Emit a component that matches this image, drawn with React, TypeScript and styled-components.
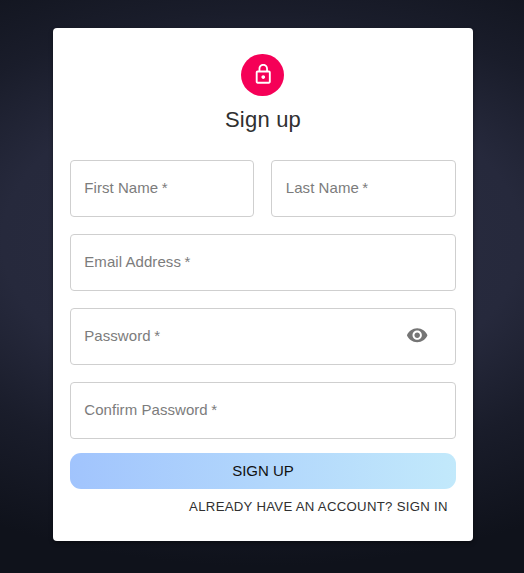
import React from "react";
import styled, { createGlobalStyle } from "styled-components";

const GlobalStyle = createGlobalStyle`
  * { box-sizing: border-box; }
  body {
    margin: 0;
    font-family: "Liberation Sans", Arial, sans-serif;
  }
`;

const Page = styled.main`
  height: 573px;
  padding: 28px 50.5px 0 52.6px;
  overflow: hidden;
  background:
    radial-gradient(ellipse 520px 310px at 50% 42%, #2a2d42 0%, #26293c 50%, rgba(30, 33, 49, 0.7) 74%, rgba(15, 18, 27, 0) 105%),
    #0f121b;
`;

const Card = styled.form`
  display: flex;
  flex-direction: column;
  width: 420.8px;
  height: 513.4px;
  padding: 25.5px 17px 0;
  border-radius: 4px;
  background: #fff;
  box-shadow: 0 2px 4px rgba(0, 0, 0, 0.4);
`;

const Header = styled.header`
  display: flex;
  flex-direction: column;
  align-items: center;
`;

const Avatar = styled.div`
  display: grid;
  place-items: center;
  width: 43px;
  height: 42.6px;
  padding-bottom: 1.4px;
  border-radius: 50%;
  background: #f50057;
`;

const Icon = styled.svg<{ $size: number }>`
  display: block;
  width: ${(p) => p.$size}px;
  height: ${(p) => p.$size}px;
  fill: currentColor;
`;

const Title = styled.h1`
  margin: 10px 0 0;
  color: #303030;
  font-size: 22px;
  font-weight: 400;
  line-height: 28px;
  letter-spacing: 0.2px;
`;

const Fields = styled.div`
  display: grid;
  grid-template-columns: 184.5px 1fr;
  gap: 17px;
  margin-top: 25.9px;
`;

const FieldBox = styled.label<{ $wide?: boolean }>`
  display: flex;
  align-items: center;
  justify-content: space-between;
  grid-column: ${(p) => (p.$wide ? "1 / -1" : "auto")};
  height: 57px;
  padding: 0 27.5px 2px 13.7px;
  border: 1px solid #cfcfcf;
  border-radius: 4px;
  color: #7c7c7c;
  font-size: 15px;
  letter-spacing: 0.06px;
`;

const Required = styled.span`
  margin-left: 3.5px;
`;

const Reveal = styled.button`
  padding: 0;
  border: 0;
  background: none;
  color: #757575;
`;

const Submit = styled.button`
  height: 36px;
  margin-top: 14px;
  padding: 0;
  border: 0;
  border-radius: 11px;
  background: linear-gradient(to right, #a1c4fd, #c2e9fb);
  color: #111;
  font: 15px "Liberation Sans", Arial, sans-serif;
`;

const SignIn = styled.a`
  align-self: flex-end;
  margin: 9.6px 8.6px 0 0;
  color: #303030;
  font-size: 13.2px;
  line-height: 16px;
  letter-spacing: 0.29px;
  white-space: nowrap;
`;

function Field({ label, wide, children }: { label: string; wide?: boolean; children?: React.ReactNode }) {
  return (
    <FieldBox $wide={wide}>
      <span>
        {label}
        <Required>*</Required>
      </span>
      {children}
    </FieldBox>
  );
}

export default function App() {
  return (
    <>
      <GlobalStyle />
      <Page>
        <Card>
          <Header>
            <Avatar>
              <Icon $size={22.5} viewBox="0 0 24 24" color="#fff">
                <path d="M12 17c1.1 0 2-.9 2-2s-.9-2-2-2-2 .9-2 2 .9 2 2 2zm6-9h-1V6c0-2.76-2.24-5-5-5S7 3.24 7 6v2H6c-1.1 0-2 .9-2 2v10c0 1.1.9 2 2 2h12c1.1 0 2-.9 2-2V10c0-1.1-.9-2-2-2zM8.9 6c0-1.71 1.39-3.1 3.1-3.1s3.1 1.39 3.1 3.1v2H8.9V6zM18 20H6V10h12v10z" />
              </Icon>
            </Avatar>
            <Title>Sign up</Title>
          </Header>
          <Fields>
            <Field label="First Name" />
            <Field label="Last Name" />
            <Field wide label="Email Address" />
            <Field wide label="Password">
              <Reveal type="button" aria-label="Toggle password visibility">
                <Icon $size={22.4} viewBox="0 0 24 24">
                  <path d="M12 4.5C7 4.5 2.73 7.61 1 12c1.73 4.39 6 7.5 11 7.5s9.27-3.11 11-7.5c-1.73-4.39-6-7.5-11-7.5zM12 17c-2.76 0-5-2.24-5-5s2.24-5 5-5 5 2.24 5 5-2.24 5-5 5zm0-8c-1.66 0-3 1.34-3 3s1.34 3 3 3 3-1.34 3-3-1.34-3-3-3z" />
                </Icon>
              </Reveal>
            </Field>
            <Field wide label="Confirm Password" />
          </Fields>
          <Submit type="submit">SIGN UP</Submit>
          <SignIn>ALREADY HAVE AN ACCOUNT? SIGN IN</SignIn>
        </Card>
      </Page>
    </>
  );
}
